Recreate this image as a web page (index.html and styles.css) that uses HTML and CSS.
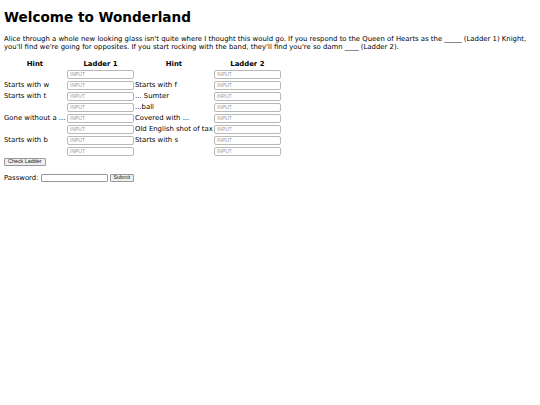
FILE: index.html
```html
<!DOCTYPE html>
<html lang="en">

<head>
    <meta charset="UTF-8">
    <title>Welcome to Wonderland</title>
    <link rel="stylesheet" href="styles.css">
</head>

<body>
    <h1>Welcome to Wonderland</h1>

    <p class="intro">Alice through a whole new looking glass isn't quite where I thought this would go. If you respond to the Queen of Hearts as the _____ (Ladder 1) Knight, you'll find we're going for opposites. If you start rocking with the band, they'll find you're so damn ____ (Ladder 2).</p>

    <!-- Лестница слов -->
    <table class="ladder">
        <tr>
            <th class="hint">Hint</th>
            <th>Ladder 1</th>
            <th>Hint</th>
            <th>Ladder 2</th>
        </tr>
        <tr>
            <td></td>
            <td><input type="text" placeholder="INPUT"></td>
            <td></td>
            <td><input type="text" placeholder="INPUT"></td>
        </tr>
        <tr>
            <td>Starts with w</td>
            <td><input type="text" placeholder="INPUT"></td>
            <td>Starts with f</td>
            <td><input type="text" placeholder="INPUT"></td>
        </tr>
        <tr>
            <td>Starts with t</td>
            <td><input type="text" placeholder="INPUT"></td>
            <td>... Sumter</td>
            <td><input type="text" placeholder="INPUT"></td>
        </tr>
        <tr>
            <td></td>
            <td><input type="text" placeholder="INPUT"></td>
            <td>...ball</td>
            <td><input type="text" placeholder="INPUT"></td>
        </tr>
        <tr>
            <td>Gone without a ...</td>
            <td><input type="text" placeholder="INPUT"></td>
            <td>Covered with ...</td>
            <td><input type="text" placeholder="INPUT"></td>
        </tr>
        <tr>
            <td></td>
            <td><input type="text" placeholder="INPUT"></td>
            <td>Old English shot of tax</td>
            <td><input type="text" placeholder="INPUT"></td>
        </tr>
        <tr>
            <td>Starts with b</td>
            <td><input type="text" placeholder="INPUT"></td>
            <td>Starts with s</td>
            <td><input type="text" placeholder="INPUT"></td>
        </tr>
        <tr>
            <td></td>
            <td><input type="text" placeholder="INPUT"></td>
            <td></td>
            <td><input type="text" placeholder="INPUT"></td>
        </tr>
    </table>

    <button class="btn check-btn" id="checkLadder">Check Ladder</button>

    <form class="password-form">
        <label for="password">Password:</label>
        <input type="password" id="password" name="password">
        <input type="submit" class="btn" value="Submit">
    </form>
</body>

</html>
```

FILE: styles.css
```css
body {
    margin: 4px;
    font-family: "DejaVu Sans", Verdana, sans-serif;
    font-size: 6.9px;
    color: #000;
    background: #fff;
}

h1 {
    font-size: 13.6px;
    margin: 5px 0 10px;
}

.intro {
    margin: 0 0 7px;
    line-height: 8px;
}

.ladder {
    border-collapse: separate;
    border-spacing: 1px;
    margin-left: -1px;
}

.ladder th {
    height: 9px;
    padding: 0;
}

.ladder th.hint {
    width: 62px;
}

.ladder td {
    padding: 0;
    height: 10px;
    white-space: nowrap;
}

.ladder input {
    width: 67px;
    height: 9px;
    box-sizing: border-box;
    margin: 0;
    padding: 0 2px;
    font-size: 5px;
    border: 1px solid #b8b8b8;
    border-radius: 2px;
    display: block;
}

.ladder input::placeholder {
    color: #999;
}

.btn {
    font-family: "Liberation Sans", Arial, sans-serif;
    font-size: 5.4px;
    height: 8px;
    padding: 0 3px;
    margin: 0;
    background: #efefef;
    border: 1px solid #999;
    border-radius: 1px;
    color: #222;
    line-height: 1;
}

.check-btn {
    margin-top: -1px;
}

.password-form {
    margin-top: 8px;
    display: flex;
    align-items: center;
    gap: 2px;
}

.password-form input[type="password"] {
    width: 67px;
    height: 8px;
    box-sizing: border-box;
    margin: 0;
    border: 1px solid #999;
    border-radius: 1px;
}
```
